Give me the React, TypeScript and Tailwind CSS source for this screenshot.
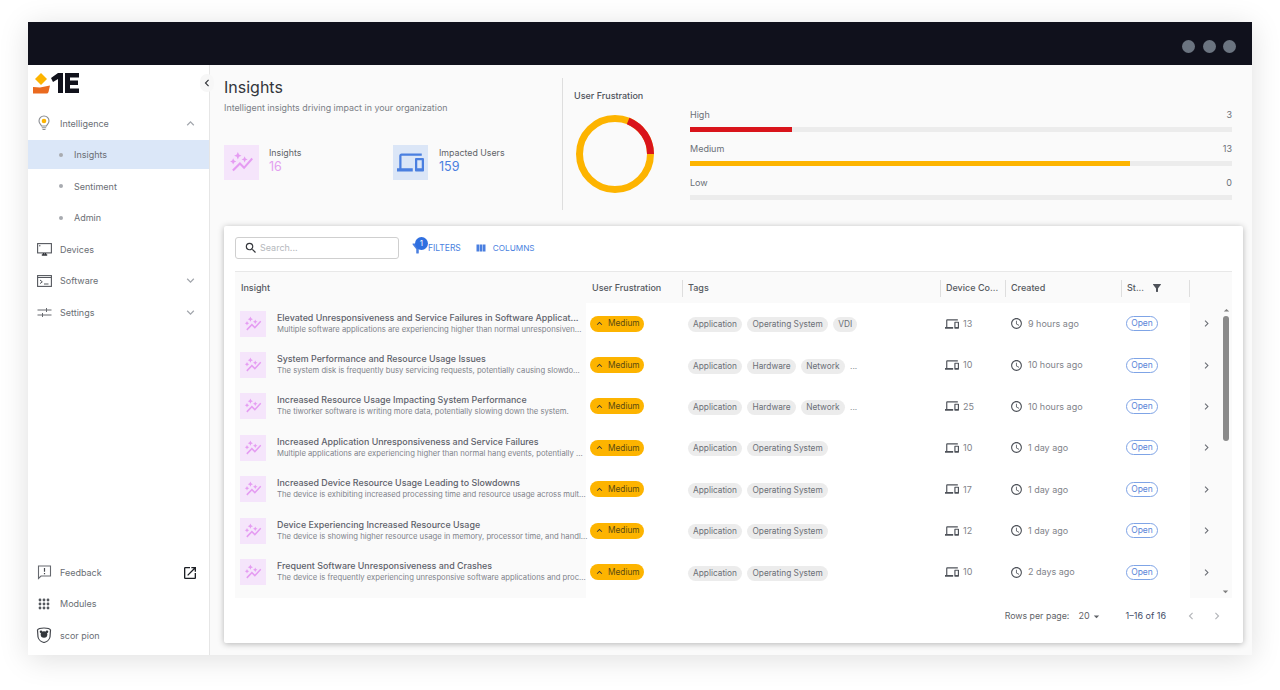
import React from "react";
import {
  MdAccessTime, MdAutoGraph, MdChevronLeft, MdChevronRight, MdDevices, MdFilterAlt, MdKeyboardArrowDown,
  MdKeyboardArrowUp, MdOpenInNew, MdSearch, MdViewColumn, MdArrowDropDown, MdArrowDropUp,
} from "react-icons/md";

const rows = [
  { t: "Elevated Unresponsiveness and Service Failures in Software Applicat...", d: "Multiple software applications are experiencing higher than normal unresponsiven...", tags: ["Application", "Operating System", "VDI"], more: false, n: 13, c: "9 hours ago" },
  { t: "System Performance and Resource Usage Issues", d: "The system disk is frequently busy servicing requests, potentially causing slowdo...", tags: ["Application", "Hardware", "Network"], more: true, n: 10, c: "10 hours ago" },
  { t: "Increased Resource Usage Impacting System Performance", d: "The tiworker software is writing more data, potentially slowing down the system.", tags: ["Application", "Hardware", "Network"], more: true, n: 25, c: "10 hours ago" },
  { t: "Increased Application Unresponsiveness and Service Failures", d: "Multiple applications are experiencing higher than normal hang events, potentially ...", tags: ["Application", "Operating System"], more: false, n: 10, c: "1 day ago" },
  { t: "Increased Device Resource Usage Leading to Slowdowns", d: "The device is exhibiting increased processing time and resource usage across mult...", tags: ["Application", "Operating System"], more: false, n: 17, c: "1 day ago" },
  { t: "Device Experiencing Increased Resource Usage", d: "The device is showing higher resource usage in memory, processor time, and handl...", tags: ["Application", "Operating System"], more: false, n: 12, c: "1 day ago" },
  { t: "Frequent Software Unresponsiveness and Crashes", d: "The device is frequently experiencing unresponsive software applications and proc...", tags: ["Application", "Operating System"], more: false, n: 10, c: "2 days ago" },
];

function NavRow({ icon, label, chev }: { icon: React.ReactNode; label: string; chev?: "up" | "down" }) {
  return (
    <div className="h-[31.5px] flex items-center text-[9px] text-[#6a6e74]">
      <div className="w-[32px] flex justify-center text-[#4a4f57]">{icon}</div>
      <span>{label}</span>
      {chev && (
        <span className="ml-auto mr-[11px] text-[#a3a7ad]">
          {chev === "up" ? <MdKeyboardArrowUp size={15} /> : <MdKeyboardArrowDown size={15} />}
        </span>
      )}
    </div>
  );
}

function SubRow({ label, active }: { label: string; active?: boolean }) {
  return (
    <div className={`h-[29px] my-[1.25px] flex items-center text-[9px] text-[#6a6e74] ${active ? "bg-[#dbe7f8]" : ""}`}>
      <span className="ml-[31px] w-[4px] h-[4px] rounded-full bg-[#a8abb0]" />
      <span className="ml-[11px]">{label}</span>
    </div>
  );
}

function Bar({ label, value, pct, color }: { label: string; value: number; pct: string; color: string }) {
  return (
    <div className="h-[34px]">
      <div className="flex justify-between text-[9px] text-[#6b7078] h-[19px] leading-[14px] items-start">
        <span>{label}</span>
        <span>{value}</span>
      </div>
      <div className="h-[5px] bg-[#ececec]">
        <div className={`h-full ${color}`} style={{ width: pct }} />
      </div>
    </div>
  );
}

const gridCols = "grid grid-cols-[351px_96px_258px_65px_116px_68px_42px]";

function Head({ label, sep = true, extra }: { label: string; sep?: boolean; extra?: React.ReactNode }) {
  return (
    <div className="flex items-center h-full pl-[6px] pt-[1px] text-[9px] font-medium text-[#555960]">
      {sep && <span className="w-px h-[17px] bg-[#dedede] mr-[5px] -ml-[6px]" />}
      <span>{label}</span>
      {extra}
    </div>
  );
}

function Logo() {
  return (
    <svg width="48" height="24" viewBox="0 0 48 24">
      <path d="M9 1 L15 7 L9 13 L3 7 Z" fill="#fdb400" />
      <path d="M1 15 L8 15.500 L18 13.500 L16.500 20 Q16 21.500 14.500 21.500 L1 21.500 Z" fill="#ea6a1f" />
      <path d="M19 6 L26 1 L31 1 L31 21 L26 21 L26 7 L21 10 Z" fill="#11121c" />
      <path d="M33 1 L47 1 L47 5.500 L38 5.500 L38 8.500 L46 8.500 L46 13 L38 13 L38 16.500 L47 16.500 L47 21 L33 21 Z" fill="#11121c" />
    </svg>
  );
}

export default function App() {
  return (
    <div className="w-[1280px] h-[690px] bg-white pt-[22px] px-[28px] overflow-hidden font-['Inter','Noto_Sans',sans-serif]">
      <div className="w-[1224px] h-[633px] flex flex-col shadow-[0_4px_28px_rgba(0,0,0,0.13)]">
        <header className="h-[43px] bg-[#10111c] flex items-center justify-end gap-[7.5px] pr-[16px] pt-[5px] shrink-0">
          <span className="w-[13px] h-[13px] rounded-full bg-[#6b7480]" />
          <span className="w-[13px] h-[13px] rounded-full bg-[#6b7480]" />
          <span className="w-[13px] h-[13px] rounded-full bg-[#6b7480]" />
        </header>
        <div className="flex flex-1 min-h-0">
          <aside className="w-[182px] shrink-0 bg-white border-r border-[#e6e6e6] flex flex-col relative">
            <div className="h-[42.5px] pl-[4px] pt-[7px] flex items-start shrink-0">
              <Logo />
            </div>
            <NavRow
              icon={
                <svg width="16" height="17" viewBox="0 0 16 17" fill="none">
                  <path d="M5.500 11 C5 9.500 3 8.500 3 6 A5 5 0 0 1 13 6 C13 8.500 11 9.500 10.500 11 Z" stroke="#8a8d92" strokeWidth="1.100" />
                  <circle cx="8" cy="6" r="2.300" fill="#fdb400" />
                  <path d="M5.800 12.700 H10.200 M6.500 14.500 H9.500" stroke="#8a8d92" strokeWidth="1.100" />
                </svg>
              }
              label="Intelligence"
              chev="up"
            />
            <SubRow label="Insights" active />
            <SubRow label="Sentiment" />
            <SubRow label="Admin" />
            <NavRow
              icon={
                <svg width="15" height="13" viewBox="0 0 15 13" fill="none">
                  <rect x="0.600" y="0.600" width="13.800" height="9.300" stroke="#55585e" strokeWidth="1.100" />
                  <circle cx="2.800" cy="2.800" r="0.700" fill="#55585e" />
                  <path d="M6.500 10 V11.500 M8.500 10 V11.500 M4.800 12 H10.200" stroke="#33363b" strokeWidth="1.400" />
                </svg>
              }
              label="Devices"
            />
            <NavRow
              icon={
                <svg width="15" height="12" viewBox="0 0 15 12" fill="none" stroke="#55585e">
                  <rect x="0.600" y="0.600" width="13.800" height="10.800" strokeWidth="1.100" />
                  <path d="M0.600 2.500 H14.400" strokeWidth="1" />
                  <path d="M3 5 L5.300 6.800 L3 8.600" strokeWidth="1" />
                  <path d="M7 9 H11.500" strokeWidth="1" />
                </svg>
              }
              label="Software"
              chev="down"
            />
            <NavRow
              icon={
                <svg width="15" height="11" viewBox="0 0 15 11" fill="none" stroke="#66696f" strokeWidth="1">
                  <path d="M0.500 3 H14.500" />
                  <path d="M9.500 1 V5" />
                  <path d="M0.500 8 H14.500" />
                  <path d="M5.500 6 V10" />
                </svg>
              }
              label="Settings"
              chev="down"
            />
            <div className="mt-auto pb-[4px]">
              <div className="relative">
                <NavRow
                  icon={
                    <svg width="15" height="15" viewBox="0 0 15 15" fill="none">
                      <path d="M1.500 1 H13.500 V11 H4 L1.500 13.500 Z" stroke="#66696f" strokeWidth="1.100" />
                      <path d="M7.500 3 V6.800 M7.500 7.900 V9.200" stroke="#45484e" strokeWidth="1.200" />
                    </svg>
                  }
                  label="Feedback"
                />
                <MdOpenInNew size={16} className="absolute right-[11px] top-[8px] text-[#1c1f24]" />
              </div>
              <NavRow
                icon={
                  <svg width="12" height="12" viewBox="0 0 12 12" fill="#55585e">
                    {[2, 6, 10].map((y) => [2, 6, 10].map((x) => <circle key={`${x}-${y}`} cx={x} cy={y} r="1.400" />))}
                  </svg>
                }
                label="Modules"
              />
              <NavRow
                icon={
                  <svg width="16" height="16" viewBox="0 0 16 16">
                    <path d="M8 1 C11 1 14 2 14.500 3 L14 10 C13.500 13 10 15 8 15.500 C6 15 2.500 13 2 10 L1.500 3 C2 2 5 1 8 1 Z" fill="#fff" stroke="#45484e" strokeWidth="1.200" />
                    <circle cx="8" cy="7.500" r="3.300" fill="#33363b" />
                    <circle cx="5" cy="4.800" r="1.300" fill="#33363b" />
                    <circle cx="11" cy="4.800" r="1.300" fill="#33363b" />
                  </svg>
                }
                label="scor pion"
              />
            </div>
            <div className="absolute top-[9px] right-[-5px] w-[14px] h-[18px] bg-[#f7f7f7] rounded-full flex items-center justify-center">
              <MdChevronLeft size={14} className="text-[#33363b]" />
            </div>
          </aside>

          <main className="flex-1 bg-[#fafafa] flex flex-col min-w-0 pl-[14px] pr-[9px]">
            <section className="h-[161px] flex shrink-0">
              <div className="w-[339px] shrink-0 border-r border-[#dedede] mt-[13px] mb-[16px]">
                <h1 className="text-[16px] leading-[20px] text-[#33363c] -mt-[1px]">Insights</h1>
                <p className="text-[8.9px] leading-[12px] text-[#7b7f86] mt-[5px]">Intelligent insights driving impact in your organization</p>
                <div className="flex mt-[31px]">
                  <div className="w-[169px] flex items-start gap-[10px]">
                    <div className="w-[35px] h-[35px] bg-[#f5e5fb] flex items-center justify-center">
                      <MdAutoGraph size={25} className="text-[#e59cf2]" />
                    </div>
                    <div className="pt-[1px]">
                      <div className="text-[8.8px] leading-[13px] text-[#5f6368]">Insights</div>
                      <div className="text-[12.5px] leading-[15px] text-[#e3a0f0]">16</div>
                    </div>
                  </div>
                  <div className="flex items-start gap-[11px]">
                    <div className="w-[35px] h-[35px] bg-[#dbe6f7] flex items-center justify-center">
                      <MdDevices size={27} className="text-[#4a7fe0]" />
                    </div>
                    <div className="pt-[1px]">
                      <div className="text-[8.8px] leading-[13px] text-[#5f6368]">Impacted Users</div>
                      <div className="text-[12.5px] leading-[15px] text-[#4a7fe0]">159</div>
                    </div>
                  </div>
                </div>
              </div>
              <div className="w-[116px] shrink-0 pl-[11px] pt-[25px]">
                <div className="text-[9px] leading-[12px] font-medium text-[#4f535a]">User Frustration</div>
                <svg width="80" height="80" viewBox="0 0 80 80" className="mt-[12px] ml-[1px]">
                  <circle cx="40" cy="40" r="35.500" fill="none" stroke="#fdb400" strokeWidth="7" />
                  <path d="M 53.100 7 A 35.500 35.500 0 0 1 75.500 40" fill="none" stroke="#d9141b" strokeWidth="7" />
                </svg>
              </div>
              <div className="flex-1 pt-[43px] pl-[11px] pr-[11px]">
                <Bar label="High" value={3} pct="18.800%" color="bg-[#d9141b]" />
                <Bar label="Medium" value={13} pct="81.200%" color="bg-[#fdb400]" />
                <Bar label="Low" value={0} pct="0%" color="bg-[#d9141b]" />
              </div>
            </section>

            <section className="w-[1019px] h-[417px] bg-white rounded-[2px] shadow-[0_1px_6px_rgba(0,0,0,0.28)] px-[11px] pt-[11px] flex flex-col relative">
              <div className="flex items-center h-[22px] shrink-0">
                <div className="w-[164px] h-[22px] border border-[#cfcfcf] rounded-[3px] flex items-center pl-[8px] gap-[2px]">
                  <MdSearch size={14} className="text-[#33363b]" />
                  <span className="text-[9px] text-[#b5b8bc]">Search...</span>
                </div>
                <div className="ml-[11px] flex items-center gap-[3px] text-[#4a7fe0] text-[8.5px] relative">
                  <MdFilterAlt size={15} />
                  <span className="uppercase">Filters</span>
                  <span className="absolute left-[5px] -top-[4px] w-[13px] h-[13px] rounded-full bg-[#2f6fe0] text-white text-[8px] flex items-center justify-center">1</span>
                </div>
                <div className="ml-[14px] flex items-center gap-[6px] text-[#4a7fe0] text-[8.2px]">
                  <MdViewColumn size={12} />
                  <span>COLUMNS</span>
                </div>
              </div>

              <div className={`${gridCols} h-[32px] mt-[12px] bg-[#fafafa] border-t border-[#e8e8e8] shrink-0`}>
                <Head label="Insight" sep={false} />
                <Head label="User Frustration" sep={false} />
                <Head label="Tags" />
                <Head label="Device Co..." />
                <Head label="Created" />
                <Head label="St..." extra={<MdFilterAlt size={12} className="ml-[7px] text-[#4f535a]" />} />
                <Head label="" />
              </div>

              <div className="h-[295px] overflow-hidden relative shrink-0 flex flex-col">
                <div className="absolute top-0 bottom-0 left-0 w-[351px] bg-[#fafafa]" />
                <div className="absolute top-0 bottom-0 right-0 w-[42px] bg-[#fafafa]" />
                {rows.map((r, i) => (
                  <div key={i} className={`${gridCols} h-[41.4px] shrink-0 relative items-center`}>
                    <div className="flex items-center pl-[5px] gap-[11px] min-w-0">
                      <div className="w-[26px] h-[26px] bg-[#f5e5fb] flex items-center justify-center shrink-0">
                        <MdAutoGraph size={18} className="text-[#e59cf2]" />
                      </div>
                      <div className="min-w-0 -mt-[1px]">
                        <div className="text-[8.9px] leading-[13px] font-medium text-[#5d616a] whitespace-nowrap">{r.t}</div>
                        <div className="text-[7.7px] leading-[12px] text-[#7f838a] whitespace-nowrap">{r.d}</div>
                      </div>
                    </div>
                    <div className="pl-[4px] flex">
                      <span className="flex items-center h-[16px] w-[54px] rounded-full bg-[#fdb400] text-[#5a4a12] text-[8.3px] pl-[4px] gap-[3px]">
                        <MdKeyboardArrowUp size={11} className="text-[#33363b]" />
                        Medium
                      </span>
                    </div>
                    <div className="flex items-center gap-[5.5px] pl-[6px] pt-[2px]">
                      {r.tags.map((t) => (
                        <span key={t} className="h-[15px] px-[5px] rounded-full bg-[#ececec] text-[8.3px] leading-[15px] text-[#6b6f76] whitespace-nowrap">{t}</span>
                      ))}
                      {r.more && <span className="text-[8.3px] text-[#8a8d93]">...</span>}
                    </div>
                    <div className="flex items-center pl-[5px] gap-[4px] text-[9px] text-[#7f838a]">
                      <MdDevices size={14} className="text-[#4f535a]" />
                      {r.n}
                    </div>
                    <div className="flex items-center pl-[5px] gap-[5px] text-[9px] text-[#7f838a]">
                      <MdAccessTime size={13} className="text-[#4f535a]" />
                      {r.c}
                    </div>
                    <div className="pl-[5px] flex">
                      <span className="flex items-center justify-center h-[15px] w-[32px] rounded-full border border-[#7fa4e6] text-[#5a86d8] text-[8.5px]">Open</span>
                    </div>
                    <div className="pl-[11px] text-[#6b6f76]">
                      <MdChevronRight size={13} />
                    </div>
                  </div>
                ))}
                <div className="absolute right-[3px] top-[2px] w-[6px] flex flex-col items-center text-[#7f7f7f]">
                  <MdArrowDropUp size={13} className="-mt-[1px] shrink-0" />
                  <div className="w-[6px] h-[125px] bg-[#8a8a8a] rounded-full mt-[-1px]" />
                </div>
                <MdArrowDropDown size={13} className="absolute right-0 bottom-0 text-[#7f7f7f]" />
              </div>

              <div className="flex items-center justify-end h-[34px] pt-[2px] text-[8.8px] text-[#5f6368] pr-[8px]">
                <span>Rows per page:</span>
                <span className="ml-[9px] flex items-center text-[9px]">20<MdArrowDropDown size={13} /></span>
                <span className="ml-[23px] text-[#3f4a66] text-[9px]">1–16 of 16</span>
                <MdChevronLeft size={14} className="ml-[18px] text-[#b4b6ba]" />
                <MdChevronRight size={14} className="ml-[12px] text-[#b4b6ba]" />
              </div>
            </section>
          </main>
        </div>
      </div>
    </div>
  );
}
